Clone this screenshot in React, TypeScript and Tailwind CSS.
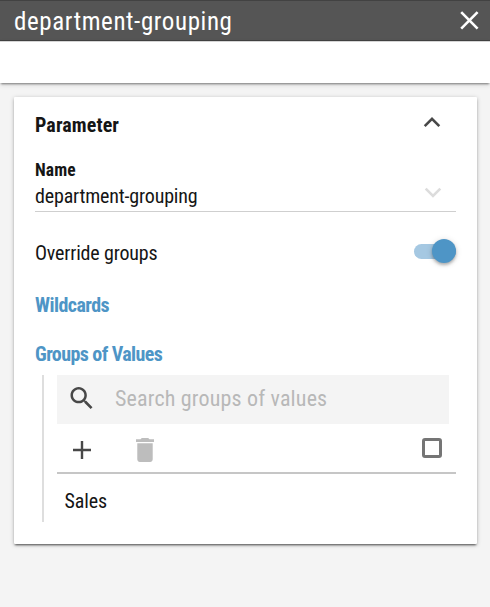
function Chevron({ up = false, className = "" }: { up?: boolean; className?: string }) {
  return (
    <svg viewBox="0 0 18 11" className={`h-[11px] w-[18px] ${className}`} fill="none" stroke="currentColor" strokeWidth="2.6">
      <path d={up ? "M1.7 9.2 9 1.9l7.3 7.3" : "M1.7 1.7 9 9l7.3-7.3"} />
    </svg>
  );
}

function Header() {
  return (
    <header className="flex h-[41px] items-center justify-between border-y border-b-[#424242] border-t-[#424242] bg-[#555] pl-[14px] pr-[11px]">
      <h1 className="pt-[2px] text-[25px] leading-[36px] tracking-[0.6px] text-white">department-grouping</h1>
      <svg viewBox="0 0 19 19" className="h-[19px] w-[19px] text-white" fill="none" stroke="currentColor" strokeWidth="2.6">
        <path d="m1.2 1.2 16.4 16.4M17.6 1.2 1.2 17.6" />
      </svg>
    </header>
  );
}

function Toggle() {
  return (
    <div className="flex h-[15px] w-[42px] items-center justify-end rounded-full bg-[#a5c8e2]">
      <div className="h-6 w-6 shrink-0 rounded-full bg-[#4e95c6] shadow-[0_2px_3px_rgba(0,0,0,0.25),0_1px_6px_rgba(0,0,0,0.15)]" />
    </div>
  );
}

function Groups() {
  return (
    <section className="mt-[7px] ml-[7px] h-[147px] border-l-2 border-[#dedede] pl-[13px]">
      <div className="mr-[7px] flex h-[49px] items-center bg-[#f4f4f4] pb-[3px] pl-[13px]">
        <svg viewBox="3 3 17.49 17.49" className="h-[22px] w-[23px] text-[#484848]" fill="currentColor">
          <path d="M15.5 14h-.79l-.28-.27C15.41 12.59 16 11.11 16 9.5 16 5.91 13.09 3 9.5 3S3 5.91 3 9.5 5.91 16 9.5 16c1.61 0 3.09-.59 4.23-1.57l.27.28v.79l5 4.99L20.49 19l-4.99-5zm-6 0C7.01 14 5 11.99 5 9.5S7.01 5 9.5 5 14 7.01 14 9.5 11.99 14 9.5 14z" />
        </svg>
        <span className="ml-[22px] text-[22px] tracking-[0.17px] text-[#b8b8b8]">Search groups of values</span>
      </div>
      <div className="flex h-[50px] items-center border-b-2 border-[#c6c6c6] pl-[16px] pr-[14px]">
        <svg viewBox="0 0 18 18" className="mt-[3px] h-[18px] w-[18px] text-[#484848]" stroke="currentColor" strokeWidth="2.4">
          <path d="M9 0v18M0 9h18" />
        </svg>
        <svg viewBox="5 3 14 18" className="ml-[45px] mt-[3px] h-[24px] w-[18px] text-[#bdbdbd]" fill="currentColor" preserveAspectRatio="none">
          <path d="M6 19c0 1.1.9 2 2 2h8c1.1 0 2-.9 2-2V7H6v12zM19 4h-3.5l-1-1h-5l-1 1H5v2h14V4z" />
        </svg>
        <div className="ml-auto h-5 w-5 rounded-[3px] border-[3px] border-[#757575]" />
      </div>
      <div className="pl-[7.5px] pt-[13px] text-[20px] leading-[28px] tracking-[-0.1px]">Sales</div>
    </section>
  );
}

export default function App() {
  return (
    <div className="h-[607px] w-[490px] overflow-hidden bg-[#f4f4f4] font-['Roboto_Condensed',Roboto,sans-serif] text-[#151515]">
      <Header />
      <div className="h-[42px] border-t border-[#d5d5d5] bg-white shadow-[0_2px_2px_-1px_rgba(0,0,0,0.45),0_2px_5px_rgba(0,0,0,0.12)]" />
      <main className="mx-[14px] mt-[14px] h-[447px] w-[463px] rounded-[1px] bg-white px-[21px] pt-[14px] shadow-[0_2px_2px_-1px_rgba(0,0,0,0.6),0_1px_4px_rgba(0,0,0,0.25)]">
        <div className="flex h-[28px] justify-between pr-[15px]">
          <h2 className="text-[20px] font-bold leading-[28px] tracking-[0.1px]">Parameter</h2>
          <Chevron up className="mt-[6px] text-[#484848]" />
        </div>
        <div className="mt-[19px] h-[24px] text-[17.5px] font-bold leading-[24px] tracking-[0.1px]">Name</div>
        <div className="flex h-[30px] items-start justify-between border-b border-[#cfcfcf] pr-[14px]">
          <span className="text-[20px] leading-[28px] tracking-[-0.17px]">department-grouping</span>
          <Chevron className="mt-[5px] text-[#dcdcdc]" />
        </div>
        <div className="mt-[25px] flex h-[28px] items-center justify-between">
          <span className="pt-[3px] text-[20px] leading-[28px] tracking-[-0.17px]">Override groups</span>
          <Toggle />
        </div>
        <h3 className="mt-[26px] text-[20px] font-bold leading-[28px] tracking-[-0.55px] text-[#4e95c6]">Wildcards</h3>
        <h3 className="mt-[21px] text-[20px] font-bold leading-[28px] tracking-[-0.58px] text-[#4e95c6]">Groups of Values</h3>
        <Groups />
      </main>
    </div>
  );
}
